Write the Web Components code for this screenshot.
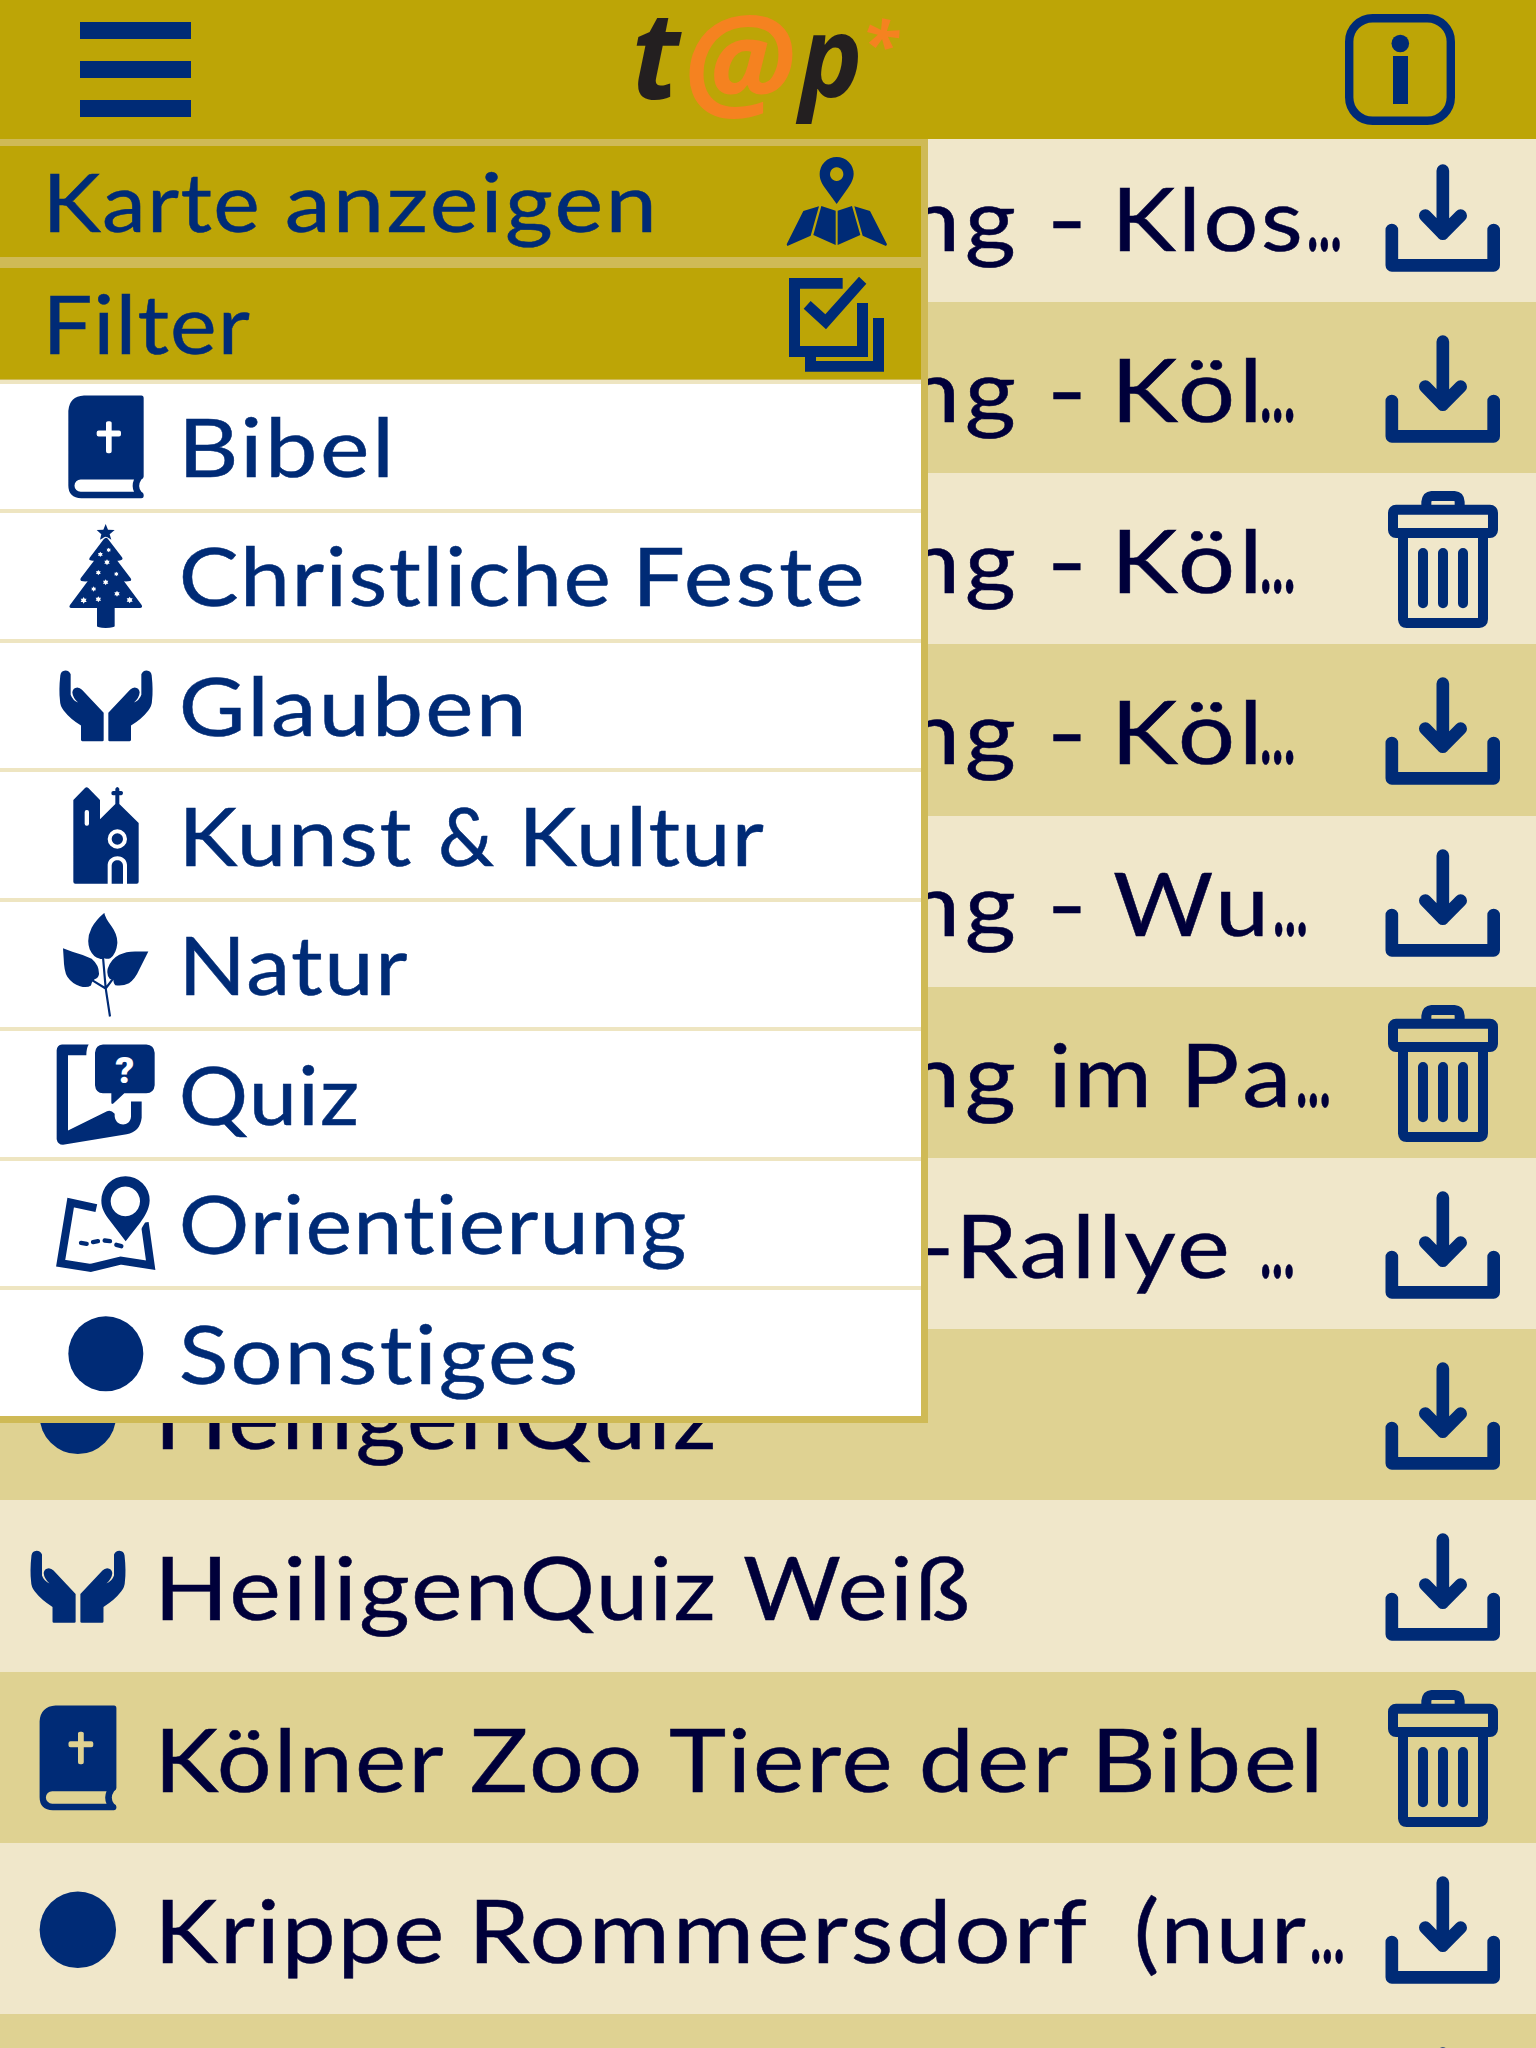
<!DOCTYPE html>
<html lang="de">
<head>
<meta charset="utf-8">
<title>t@p*</title>
<style>
html,body{margin:0;height:2048px;overflow:hidden}
body{font-family:Lato,"Open Sans","Liberation Sans",sans-serif;font-weight:400}
</style>
</head>
<body>
<tap-app></tap-app>
<script>
const BLUE = '#002b76';
const icons = {
  bibel: ['72 43.5 312 312', `<path fill-rule="evenodd" d="M162 45H334Q341 45 341 53V288Q341 294 334 297Q321 317 334 334Q341 337 341 343V347Q341 353 334 353H154Q115 352 115 315V91Q118 48 162 45ZM152 297A18.500 18.500 0 0 0 152 334H312Q304 316 312 297ZM228 127V150H206Q200 150 200 156V162Q200 168 206 168H228V212Q228 218 234 218H239Q245 218 245 212V168H267Q273 168 273 162V156Q273 150 267 150H245V127Q245 122 239 122H234Q228 122 228 127Z"/>`],
  feste: ['72 432 312 312', `<path d="M227 432L234 449L254 450L239 463L244 479L237 475Q227 466 218 475L210 479L214 463L200 450L220 449Z"/><path d="M228 473Q231 473 234 477L276 532Q280 538 274 540Q268 543 262 542L302 595Q306 602 300 603Q291 605 282 604L335 675Q339 683 330 684H254V739Q254 743 227 744Q201 743 201 739V684H124Q115 683 120 675L173 604Q162 605 154 603Q149 601 152 595L192 542Q185 543 179 540Q176 538 179 533L221 478Q225 473 228 473Z"/><g fill="#fff">${[[236,510,7],[211,523,8],[231,547,9],[205,578,8],[259,582,7],[227,607,9],[191,627,8],[261,641,9],[161,661,10],[205,658,9],[299,660,10]].map(([x,y,r])=>`<path d="M${x} ${y-r}l${r*.3} ${r*.5}h${r*.6}l${-r*.3} ${r*.5}l${r*.3} ${r*.5}h${-r*.6}l${-r*.3} ${r*.5}l${-r*.3} ${-r*.5}h${-r*.6}l${r*.3} ${-r*.5}l${-r*.3} ${-r*.5}h${r*.6}z"/>`).join('')}</g>`],
  glauben: ['72 40.500 312 312', `<path d="M91 104Q93 91 106 90Q118 91 122 101V163Q128 180 144 186Q128 171 127 155Q129 142 142 141Q150 142 156 148L221 217V299Q221 302 217 302H157Q153 302 153 298V255Q121 236 101 210Q90 196 90 181Q86 150 91 104Z"/><path transform="matrix(-1 0 0 1 456 0)" d="M91 104Q93 91 106 90Q118 91 122 101V163Q128 180 144 186Q128 171 127 155Q129 142 142 141Q150 142 156 148L221 217V299Q221 302 217 302H157Q153 302 153 298V255Q121 236 101 210Q90 196 90 181Q86 150 91 104Z"/>`],
  kultur: ['72 429 312 312', `<path d="M130 480L165 444Q170 439 175 444L210 480V538L256 492V466H249Q244 466 244 459Q244 453 250 453H256V446Q262 436 268 446V453H274Q280 454 279 459Q279 465 274 466H268V492L326 549V725Q326 731 320 731H291V674C289 640 236 640 233 674V731H136Q130 731 130 725Z"/><path d="M245 731V678C245 655 279 655 279 678V731Z"/><rect x="164" y="510" width="13" height="47" rx="6" fill="#fff"/><circle cx="262" cy="597" r="23" fill="none" stroke="#fff" stroke-width="12"/>`],
  natur: ['72 67.500 312 312', `<path d="M223 67Q224 80 245 108Q263 133 262 158Q259 190 241 203Q232 206 223 203Q216 208 208 204Q190 200 179 176Q168 146 185 112Q197 89 223 67ZM99 173L127 184Q160 193 185 205Q208 225 207 251Q205 263 194 266Q186 270 183 285Q171 293 150 287Q127 281 112 259Q102 242 101 203ZM355 183L329 235Q315 267 297 278Q277 288 256 284Q251 281 250 268Q247 264 240 266Q229 255 233 235Q242 206 268 193Q290 182 320 183Z"/><path d="M219 200L227 293L240 378M186 269L227 294L251 262" fill="none" stroke="${BLUE}" stroke-width="6.500"/>`],
  quiz: ['72 457.500 312 312', `<path d="M96 462H176Q169 474 169 494H114V720L231 662Q243 657 254 670V677C257 710 302 710 303 677V633H335V682Q330 725 290 731L99 763Q83 762 80 746V479Q81 464 96 462Z"/><path d="M219 462H349Q372 463 374 487V584Q372 607 349 608H283L250 639Q244 643 244 636V608H219Q197 607 195 584V487Q197 463 219 462Z"/><text x="284" y="576" text-anchor="middle" fill="#fff" font-family="Roboto,sans-serif" font-weight="900" font-size="112">?</text>`],
  orient: ['72 64.500 312 312', `<path fill="none" stroke="${BLUE}" stroke-width="24" d="M199 173L122 156L92 338L182 352L272 330L362 344L344 216"/><path fill="#fff" d="M210 140L202 187L286 288L333 236L362 188L340 150Z"/><path fill-rule="evenodd" d="M286 77A72 73 0 0 1 359 150C358 178 343 199 331 216L287 272L237 207C225 191 214 175 214 150A72 73 0 0 1 286 77ZM286 108a44 44.500 0 1 0 .1 0Z"/><path fill="none" stroke="${BLUE}" stroke-width="13" stroke-linecap="round" d="M153 277L170 280M189 275L204 272M224 270L240 272M259 283L274 287"/>`],
  punkt: ['72 454.500 312 312', `<circle cx="227.500" cy="610" r="112.500"/>`],
  download: ['132 552 354 513.600', `<path fill="none" stroke="${BLUE}" stroke-width="38" stroke-linecap="round" stroke-linejoin="round" d="M155.500 849V955H461V849M308.500 671V860M256 806L308.500 860L362 806"/>`],
  trash: ['132 39 354 513.600', `<g fill="none" stroke="${BLUE}" stroke-width="30"><path d="M259 142V126Q261 109 275 108H343Q358 109 359 126V142"/><rect x="159" y="149" width="300" height="70" rx="9"/><path d="M189 228V478Q190 489 200 489H418Q429 489 429 478V228"/><path stroke-linecap="round" d="M249 279V430M309 279V430M369 279V430"/></g><path fill="none" stroke="${BLUE}" stroke-width="12" d="M168 219V155H450V213H168"/>`],
  karte: ['135 18 315 333', `<path fill-rule="evenodd" d="M290 51A51 51 0 0 1 341 102C340 120 332 132 324 144L290 192L255 144C247 132 239 120 239 102A51 51 0 0 1 290 51ZM290 82a20 20.500 0 1 0 .1 0Z"/><path d="M190 213L237 199L212 287L142 318L140 313ZM244 198L287 212V315L220 285ZM293 212L336 198L361 285L293 315ZM343 199L390 213L441 313L438 318L368 287Z"/>`],
  filter: ['135 384 315 333', `<path d="M147 414H308V446H180V618H351V489H384V651H228V663H399V534H432V695H195V651H147ZM191 506L212 483L256 523L357 410L379 431L258 568Z"/>`],
  info: ['0 0 110 111', `<rect x="4.200" y="4.200" width="101.600" height="102.600" rx="23.500" fill="none" stroke="${BLUE}" stroke-width="8.400"/><circle cx="55.300" cy="29.500" r="8.800"/><rect x="48" y="42" width="15" height="48"/>`]
};

function define(name, render) {
  customElements.define(name, class extends HTMLElement {
    connectedCallback() {
      if (!this.shadowRoot) this.attachShadow({mode: 'open'});
      render(this, this.shadowRoot);
    }
  });
}
const pen = document.createElement('canvas').getContext('2d');

define('tap-icon', (el, root) => {
  const [box, body] = icons[el.getAttribute('name')];
  root.innerHTML = `<style>:host{display:block;flex:none}svg{display:block;width:100%;height:100%;fill:${BLUE}}g[fill="#fff"],[fill="#fff"]{fill:var(--hole,#fff)}[stroke="#fff"]{stroke:var(--hole,#fff)}</style><svg viewBox="${box}">${body}</svg>`;
});

// One line of text whose pieces occupy given ink ranges: at="left-right,left-right,…".
// Pieces are split at spaces, and at "|", which draws nothing.
define('fit-text', (el, root) => {
  const size = +el.getAttribute('size');
  let cursor = 0, out = '';
  const parts = el.getAttribute('text').split(/([ |])/);
  el.getAttribute('at').split(',').forEach((range, i) => {
    const [a, b] = range.split('-').map(Number), word = parts[i * 2];
    const weight = word === '…' ? 900 : 400;
    pen.font = `${weight} ${size}px Lato, "Open Sans", "Liberation Sans", sans-serif`;
    const m = pen.measureText(word);
    const ink = m.actualBoundingBoxLeft + m.actualBoundingBoxRight;
    const n = [...word].length, scale = n > 1 ? Math.pow((b - a) / ink, .72) : (b - a) / ink;
    const gap = n > 1 ? ((b - a) / scale - ink) / (n - 1) : 0;
    out += `<span style="margin-left:${a - cursor}px;width:${b - a}px"><b style="font-weight:${weight};letter-spacing:${gap}px;transform:translateX(${m.actualBoundingBoxLeft * scale}px) scaleX(${scale})">${word.replace('&', '&amp;')}</b></span>${parts[i * 2 + 1] === ' ' ? ' ' : ''}`;
    cursor = b;
  });
  root.innerHTML = `<style>:host{display:flex;flex:none;width:0;white-space:pre;font-size:${size}px}span{display:block;flex:none}b{display:inline-block;-webkit-text-stroke:.5px currentColor;transform-origin:0 50%}</style>${out}`;
});

define('tap-logo', (el, root) => {
  const glyphs = [
    ['t', 0, 17.5, 46, 82.5, '#231f20', 'italic 700 100px "Open Sans"'],
    ['@', 53, 14, 104, 105, '#f58220', 'italic 700 100px "Open Sans"'],
    ['p', 159, 33.5, 64, 90.5, '#231f20', 'italic 700 100px "Open Sans"'],
    ['*', 231, 18, 33, 32, '#f58220', 'italic 700 100px "Open Sans"']
  ];
  root.innerHTML = `<style>:host{display:block;width:264px;height:139px}svg{display:block;overflow:visible}</style><svg width="264" height="139">` +
    glyphs.map(([c, x, y, w, h, col, font]) => {
      pen.font = font;
      const m = pen.measureText(c);
      const sx = w / (m.actualBoundingBoxLeft + m.actualBoundingBoxRight), sy = h / (m.actualBoundingBoxAscent + m.actualBoundingBoxDescent);
      return `<text fill="${col}" style='font:${font}' transform="matrix(${sx} 0 0 ${sy} ${x + m.actualBoundingBoxLeft * sx} ${y + m.actualBoundingBoxAscent * sy})">${c}</text>`;
    }).join('') + '</svg>';
});

define('tap-header', (el, root) => {
  root.innerHTML = `<style>:host{display:flex;align-items:center;justify-content:space-between;box-sizing:border-box;height:139px;padding:0 81px 0 80px;background:#bda506}
  .bars{display:flex;flex-direction:column;gap:22px;width:111px}.bars i{height:17px;background:${BLUE}}
  tap-icon{width:110px;height:111px}</style><div class="bars"><i></i><i></i><i></i></div><tap-logo></tap-logo><tap-icon name="info"></tap-icon>`;
});

define('tour-row', (el, root) => {
  const icon = el.getAttribute('icon'), text = el.getAttribute('text');
  root.innerHTML = `<style>:host{display:flex;flex:none;align-items:center;box-sizing:border-box;height:171.2px;padding:0 34px 0 0;background:var(--hole);color:#00003a;overflow:hidden}
  .lead{width:106px;height:106px;margin:2.4px 0 0 24.5px}.slot{flex:none;width:130.5px}.act{width:118px;height:171.2px;margin-left:auto}
  fit-text{line-height:171.2px;margin-left:-130.500px;padding-top:2px}</style>
  <div class="slot">${icon ? `<tap-icon class="lead" name="${icon}"></tap-icon>` : ''}</div>
  ${text ? `<fit-text size="88" text="${text}" at="${el.getAttribute('at')}"></fit-text>` : ''}
  <tap-icon class="act" name="${el.getAttribute('action')}"></tap-icon>`;
});

define('menu-head', (el, root) => {
  root.innerHTML = `<style>:host{display:flex;align-items:center;height:111px;background:#bda506;color:${BLUE};padding-right:31px}
  tap-icon{width:105px;height:111px;margin-left:auto}fit-text{line-height:111px;padding-bottom:2px}</style>
  <fit-text size="82" text="${el.getAttribute('text')}" at="${el.getAttribute('at')}"></fit-text><tap-icon name="${el.getAttribute('icon')}"></tap-icon>`;
});

define('menu-item', (el, root) => {
  root.innerHTML = `<style>:host{display:flex;align-items:center;box-sizing:border-box;height:129.53px;border-top:4px solid #eee5c1;background:#fff;color:${BLUE}}
  tap-icon{width:104px;height:104px;margin:1px 0 0 54px}fit-text{line-height:125px;margin-left:-158px;padding-bottom:2px}</style>
  <tap-icon name="${el.getAttribute('icon')}"></tap-icon><fit-text size="82" text="${el.getAttribute('text')}" at="${el.getAttribute('at')}"></fit-text>`;
});

define('filter-menu', (el, root) => {
  const items = [
    ['bibel', 'Bibel', '186-388'], ['feste', 'Christliche Feste', '181.7-608,640-862'],
    ['glauben', 'Glauben', '182-521.5'], ['kultur', 'Kunst &amp; Kultur', '186-411,441-494,526-764'],
    ['natur', 'Natur', '186-407.5'], ['quiz', 'Quiz', '182-357'],
    ['orient', 'Orientierung', '182-686'], ['punkt', 'Sonstiges', '181-577']];
  root.innerHTML = `<style>:host{display:block;box-sizing:border-box;width:928px;height:1284px;border:solid #cfba56;border-width:7px 7px 7px 0;background:#cfba56}
  .heads{display:flex;flex-direction:column;gap:11px;height:233.7px}</style>
  <div class="heads"><menu-head text="Karte anzeigen" at="49.7-257,287-651.5" icon="karte"></menu-head><menu-head text="Filter" at="49.7-249.7" icon="filter"></menu-head></div>
  ${items.map(([i, t, at]) => `<menu-item icon="${i}" text="${t}" at="${at}"></menu-item>`).join('')}`;
});

define('tap-app', (el, root) => {
  const ng = '912-954.5,967-1014', dash = ng + ',1052.5-1080.5,';
  const rows = [
    ['', 'n|g - Klos|…', dash + '1120-1299.5,1309-1340', 'download'],
    ['', 'n|g - Köl|…', dash + '1120-1256,1262-1293.5', 'download'],
    ['', 'n|g - Köl|…', dash + '1120-1256,1262-1293.5', 'trash'],
    ['', 'n|g - Köl|…', dash + '1120-1256,1262-1293.5', 'download'],
    ['', 'n|g - Wu|…', dash + '1113.5-1262,1275-1306', 'download'],
    ['', 'n|g im Pa|…', ng + ',1053-1146,1189-1286,1298-1329', 'trash'],
    ['', '-|Rallye …', '921-949,964-1227,1261.5-1292.5', 'download'],
    ['punkt', 'HeiligenQuiz', '162.5-713', 'download'],
    ['glauben', 'Heiligen|Quiz Weiß', '162.5-513,524-713,744-967.5', 'download'],
    ['bibel', 'Kölner Zoo Tiere der Bibel', '162.5-443,472-639,670-890,922-1068,1100-1317', 'trash'],
    ['punkt', 'Krippe Rommersdorf (nur|…', '162.5-441,477-1086,1137-1306,1312-1343', 'download'],
    ['', '', '', 'download']];
  root.innerHTML = `<style>:host{display:flex;flex-direction:column;position:relative;width:1536px;height:2048px;overflow:hidden;background:#f0e7ca}
  tap-header{flex:none;z-index:2}
  .list{display:flex;flex-direction:column;flex:none;margin-top:-8.1px}
  tour-row{--hole:#f0e7ca}tour-row:nth-child(even){--hole:#dfd292}
  filter-menu{position:absolute;left:0;top:139px;z-index:1;--hole:#fff}</style>
  <tap-header></tap-header>
  <div class="list">${rows.map(([i, t, at, a]) => `<tour-row icon="${i}" text="${t}" at="${at}" action="${a}"></tour-row>`).join('')}</div>
  <filter-menu></filter-menu>`;
});
</script>
</body>
</html>
